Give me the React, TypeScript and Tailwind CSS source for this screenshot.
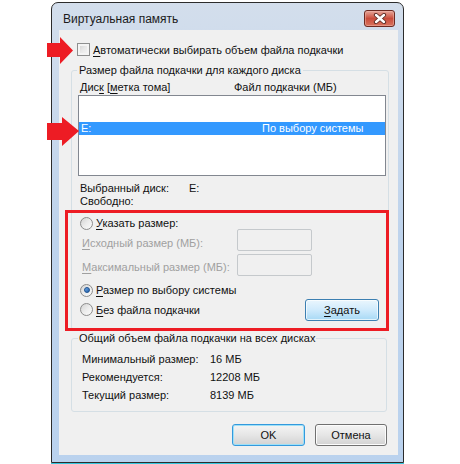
import React from "react";

const font = { fontFamily: '"Liberation Sans", Arial, sans-serif' };

function U({ children }: { children: React.ReactNode }) {
  return <span className="underline underline-offset-2">{children}</span>;
}

function Radio({ checked }: { checked?: boolean }) {
  return (
    <span className="flex h-[13px] w-[13px] shrink-0 items-center justify-center rounded-full border border-[#8c8c8c] bg-gradient-to-br from-[#d2d2d2] via-[#ececec] to-[#fbfbfb]">
      {checked && (
        <span className="h-[6px] w-[6px] rounded-full border border-[#1b4f8f] bg-gradient-to-br from-[#6fa9e6] to-[#1d5ea8]" />
      )}
    </span>
  );
}

function Button({
  children,
  w,
  kind,
}: {
  children: React.ReactNode;
  w: string;
  kind: "plain" | "default" | "hot";
}) {
  const base =
    "flex h-[22px] items-center justify-center rounded-[3px] border text-[11px] leading-[14px]";
  if (kind === "hot")
    return (
      <div
        className={`${base} ${w} border-[#3c7fb1] bg-gradient-to-b from-[#eaf6fd] via-[#cfeafc] to-[#a7d9f5] shadow-[inset_0_0_0_1px_#ffffffaa]`}
      >
        {children}
      </div>
    );
  if (kind === "default")
    return (
      <div
        className={`${base} ${w} border-[#3399dd] bg-gradient-to-b from-[#f4f4f4] via-[#e6e6e6] to-[#d2d2d2] shadow-[inset_0_0_0_1px_#9ee0f7]`}
      >
        {children}
      </div>
    );
  return (
    <div
      className={`${base} ${w} border-[#707070] bg-gradient-to-b from-[#f4f4f4] via-[#e6e6e6] to-[#d2d2d2] shadow-[inset_0_0_0_1px_#fcfcfc]`}
    >
      {children}
    </div>
  );
}

export default function App() {
  return (
    <div
      className="relative h-[464px] w-[460px] overflow-hidden whitespace-nowrap bg-white text-[11px] text-[#111]"
      style={font}
    >
      {/* window */}
      <div className="ml-[51px] mt-[2px] flex h-[461px] w-[353px] flex-col rounded-t-[7px] border border-[#2c2c2c] bg-gradient-to-b from-[#d3deec] via-[#bed3ec] to-[#bad2ee]">
        {/* title bar */}
        <div className="flex h-[27px] shrink-0 items-start justify-between">
          <span className="ml-[11px] mt-[9px] text-[12px] leading-[14px] text-[#1b1b1b]">
            Виртуальная память
          </span>
          <div className="mr-[8px] mt-[7px] flex h-[17px] w-[31px] items-center justify-center rounded-[3px] border border-[#6d2a22] bg-gradient-to-b from-[#e6a59a] via-[#c94c3c] to-[#d9735e] shadow-[inset_0_0_0_1px_#f0b9ae80]">
            <svg width="14" height="11" viewBox="0 0 14 11">
              <path
                d="M3 2 L11 9 M11 2 L3 9"
                stroke="#5a2a24"
                strokeWidth="4.2"
                strokeLinecap="round"
              />
              <path
                d="M3 2 L11 9 M11 2 L3 9"
                stroke="#ffffff"
                strokeWidth="2.4"
                strokeLinecap="round"
              />
            </svg>
          </div>
        </div>

        {/* client area */}
        <div className="ml-[7px] h-[425px] w-[339px] bg-[#f0f0f0]">
          {/* auto checkbox */}
          <div className="ml-[18px] mt-[13px] flex h-[13px] items-center gap-[3px]">
            <span className="h-[13px] w-[13px] border border-[#8e8f8f] bg-gradient-to-br from-[#cfcfcf] via-[#e9e9e9] to-[#f8f8f8] shadow-[inset_0_0_0_2px_#f4f4f4]" />
            <span className="leading-[14px]">
              <U>А</U>втоматически выбирать объем файла подкачки
            </span>
          </div>

          {/* per-disk group */}
          <fieldset className="ml-[12px] mt-[7px] w-[318px] rounded-[3px] border border-[#d5dfe5] pb-[9px]">
            <legend className="ml-[5px] px-[2px] leading-[14px]">
              Размер файла подкачки для каждого диска
            </legend>
            <div className="mt-[3px] flex h-[14px] leading-[14px]">
              <span className="ml-[8px] w-[154px]">
                Дис<U>к</U> [<U>м</U>етка тома]
              </span>
              <span>Файл подкачки (МБ)</span>
            </div>
            <div className="ml-[6px] mt-[1px] h-[81px] w-[308px] border border-[#828790] bg-white">
              <div className="mt-[26px] grid h-[13px] grid-cols-[183px_1fr] bg-[#3399ff] leading-[13px] text-white">
                <span className="pl-[2px]">E:</span>
                <span>По выбору системы</span>
              </div>
            </div>

            <div className="ml-[8px] mt-[6px] flex h-[13px] leading-[13px]">
              <span className="w-[109px]">Выбранный диск:</span>
              <span>E:</span>
            </div>
            <div className="ml-[8px] h-[13px] leading-[13px]">Свободно:</div>

            <div className="ml-[8px] mt-[9px] flex h-[12px] items-center gap-[3px] leading-[14px]">
              <Radio />
              <span>
                <U>У</U>казать размер:
              </span>
            </div>
            <div className="ml-[10px] flex h-[22px] items-start">
              <span className="mt-[7px] w-[155px] leading-[14px] text-[#a0a0a0]">
                <U>И</U>сходный размер (МБ):
              </span>
              <span className="h-[22px] w-[75px] rounded-[2px] border border-[#c5c9cc] bg-[#f0f0f0]" />
            </div>
            <div className="ml-[10px] mt-[3px] flex h-[22px] items-start">
              <span className="mt-[6px] w-[155px] leading-[14px] text-[#a0a0a0]">
                <U>М</U>аксимальный размер (МБ):
              </span>
              <span className="h-[22px] w-[75px] rounded-[2px] border border-[#c5c9cc] bg-[#f0f0f0]" />
            </div>

            <div className="ml-[8px] mt-[7px] flex h-[14px] items-center gap-[3px] leading-[14px]">
              <Radio checked />
              <span>
                <U>Р</U>азмер по выбору системы
              </span>
            </div>
            <div className="ml-[8px] mt-[2px] flex h-[21px] items-center justify-between pr-[9px]">
              <div className="flex items-center gap-[3px] leading-[14px]">
                <Radio />
                <span>
                  <U>Б</U>ез файла подкачки
                </span>
              </div>
              <Button w="w-[74px]" kind="hot">
                <span>
                  <U>З</U>адать
                </span>
              </Button>
            </div>
          </fieldset>

          {/* totals group */}
          <fieldset className="ml-[12px] mt-[1px] w-[316px] rounded-[3px] border border-[#d5dfe5] pb-[7px]">
            <legend className="ml-[6px] px-[1px] leading-[14px]">
              Общий объем файла подкачки на всех дисках
            </legend>
            <div className="ml-[10px] mt-[5px]">
              {[
                ["Минимальный размер:", "16 МБ"],
                ["Рекомендуется:", "12208 МБ"],
                ["Текущий размер:", "8139 МБ"],
              ].map(([k, v]) => (
                <div key={k} className="flex h-[18px] items-center leading-[14px]">
                  <span className="w-[128px]">{k}</span>
                  <span>{v}</span>
                </div>
              ))}
            </div>
          </fieldset>

          {/* dialog buttons */}
          <div className="mr-[11px] mt-[12px] flex justify-end gap-[10px]">
            <Button w="w-[73px]" kind="default">
              OK
            </Button>
            <Button w="w-[72px]" kind="plain">
              Отмена
            </Button>
          </div>
        </div>
      </div>
      <div className="ml-[51px] h-[1px] w-[353px] bg-[#34c6dc]" />

      {/* annotation: red frame */}
      <div className="absolute left-[65px] top-[210px] h-[121px] w-[324px] border-[3px] border-[#ed1c24]" />

      {/* annotation: arrows */}
      <svg className="absolute left-[47px] top-[37px]" width="26" height="27" viewBox="0 0 26 27">
        <polygon points="0,6 13,6 13,0 26,13.5 13,27 13,20 0,20" fill="#ed1c24" />
      </svg>
      <svg className="absolute left-[47px] top-[117px]" width="32" height="29" viewBox="0 0 32 29">
        <polygon points="0,6 15,6 15,0 32,14 15,29 15,23 0,23" fill="#ed1c24" />
      </svg>
    </div>
  );
}
